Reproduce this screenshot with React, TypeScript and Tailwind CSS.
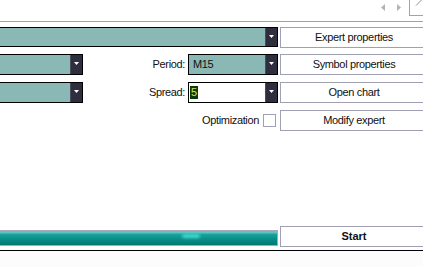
import React from 'react';

const Arrow = () => (
  <svg width="5" height="3" viewBox="0 0 5 3" className="block">
    <polygon points="0,0 5,0 2.5,3" fill="#ffffff" />
  </svg>
);

const DropButton = () => (
  <div className="w-[12px] h-full shrink-0 bg-[#2e2e3e] border-l border-[#4a4a5a] flex items-center justify-center pb-[2px]">
    <Arrow />
  </div>
);

const Combo = ({ className = '', children }: { className?: string; children?: React.ReactNode }) => (
  <div className={`h-[20px] shrink-0 flex border border-black ${className}`}>
    <div className="flex-1 flex items-center pl-[4px]">{children}</div>
    <DropButton />
  </div>
);

const Button = ({ label, bold = false }: { label: string; bold?: boolean }) => (
  <div
    className={`w-[148px] h-[21px] shrink-0 ml-[2px] bg-white border border-[#a0a0b4] flex items-center justify-center ${
      bold ? 'font-bold tracking-normal' : ''
    }`}
  >
    {label}
  </div>
);

export default function App() {
  return (
    <div className="w-[423px] h-[267px] overflow-hidden bg-white flex flex-col font-['Liberation_Sans',Arial,sans-serif] text-[11px] tracking-[-0.35px] text-[#101010]">
      {/* tab strip */}
      <div className="h-[21px] flex justify-end items-start">
        <div className="flex items-center gap-[12px] mt-[4px] mr-[8px]">
          <svg width="4" height="7" viewBox="0 0 4 7">
            <polygon points="4,0 0,3.5 4,7" fill="#b4b4b4" />
          </svg>
          <svg width="4" height="7" viewBox="0 0 4 7">
            <polygon points="0,0 4,3.5 0,7" fill="#b4b4b4" />
          </svg>
        </div>
        <div className="w-[14px] h-[16px] border-l border-b border-[#a0a0b8] relative">
          <svg width="8" height="6" viewBox="0 0 8 6" className="absolute left-[5px] top-0">
            <line x1="1" y1="5.5" x2="6.5" y2="0" stroke="#9090a0" strokeWidth="1" />
          </svg>
        </div>
      </div>
      <div className="h-px bg-[#a0a0b8]" />

      {/* row 1 */}
      <div className="flex mt-[5px] h-[21px]">
        <Combo className="w-[278px] border-l-0 bg-[#8ab8b4]" />
        <Button label="Expert properties" />
      </div>

      {/* row 2 */}
      <div className="flex mt-[6px] h-[21px]">
        <div className="w-[278px] shrink-0 flex items-start">
          <Combo className="w-[83px] h-[21px] border-l-0 bg-[#8ab8b4]" />
          <div className="flex-1 text-right pr-[3px] leading-[21px]">Period:</div>
          <Combo className="w-[90px] h-[21px] bg-[#8ab8b4]">M15</Combo>
        </div>
        <Button label="Symbol properties" />
      </div>

      {/* row 3 */}
      <div className="flex mt-[7px] h-[21px]">
        <div className="w-[278px] shrink-0 flex items-start">
          <Combo className="w-[83px] h-[21px] border-l-0 bg-[#8ab8b4]" />
          <div className="flex-1 text-right pr-[3px] leading-[21px]">Spread:</div>
          <div className="w-[90px] h-[21px] shrink-0 flex border border-black bg-white">
            <div className="flex-1 flex items-center pl-[1px]">
              <span className="bg-[#0c3a0c] text-[#c8e860] px-[1px] leading-[13px] tracking-normal">5</span>
            </div>
            <DropButton />
          </div>
        </div>
        <Button label="Open chart" />
      </div>

      {/* row 4 */}
      <div className="flex mt-[7px] h-[21px]">
        <div className="w-[278px] shrink-0 flex items-center justify-end">
          <span className="mr-[4px]">Optimization</span>
          <div className="w-[13px] h-[13px] border border-[#a0a0b4] bg-white mr-[2px]" />
        </div>
        <Button label="Modify expert" />
      </div>

      {/* progress + start */}
      <div className="flex mt-auto h-[21px]">
        <div className="w-[278px] shrink-0 pt-[4px]">
          <div className="h-[16px] border border-[#a8a8bc] border-l-0 relative bg-[linear-gradient(to_bottom,#5cc4bc_0px,#5cc4bc_2px,#18a49c_3px,#0a8e88_8px,#007872_14px)]">
            <div className="absolute left-[182px] top-[3px] w-[18px] h-[4px] rounded-full bg-[#40d8d0] blur-[1.5px]" />
          </div>
        </div>
        <Button label="Start" bold />
      </div>
      <div className="h-[3px]" />
      <div className="h-px bg-black" />
      <div className="h-[16px] bg-[#fcfcfc]" />
    </div>
  );
}
